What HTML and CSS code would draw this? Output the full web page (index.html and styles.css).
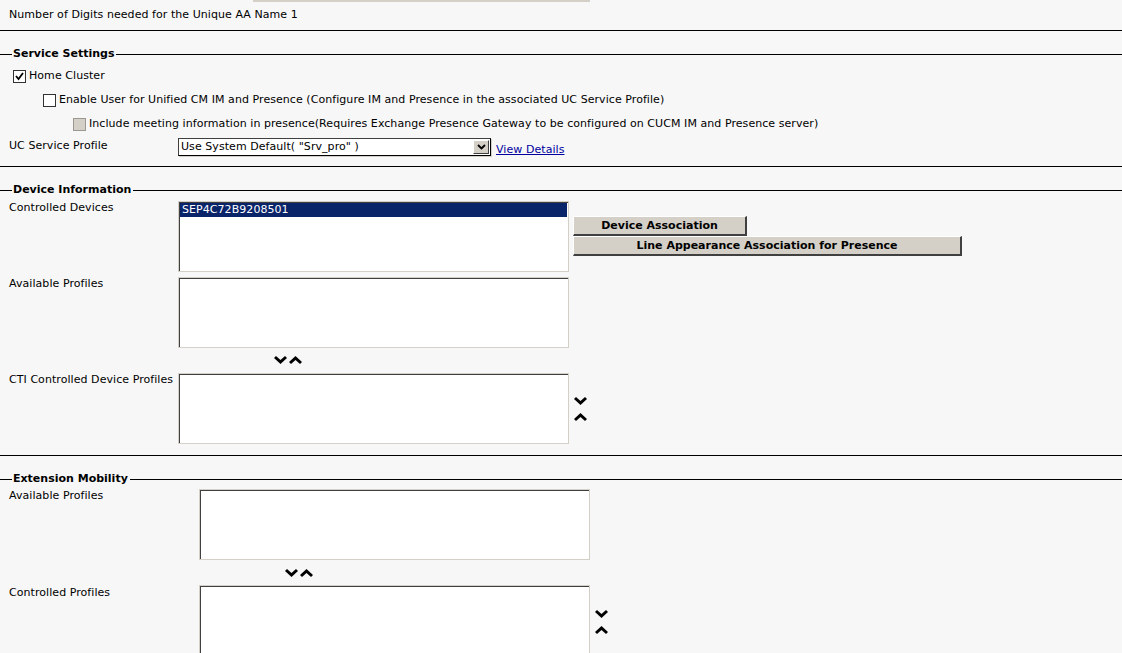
FILE: index.html
```html
<!DOCTYPE html>
<html>
<head>
<meta charset="utf-8">
<link rel="stylesheet" href="styles.css">
</head>
<body>
<div class="page">
  <div class="top-input"></div>
  <div class="row digits">Number of Digits needed for the Unique AA Name 1</div>
  <div class="rule rule-1"></div>

  <div class="legend legend-service"><span>Service Settings</span></div>
  <div class="chk-row chk-home"><span class="chk checked"><svg width="11" height="11" viewBox="0 0 11 11"><path d="M2 5 L4.5 8 L9 2" fill="none" stroke="#000" stroke-width="1.8"/></svg></span><span>Home Cluster</span></div>
  <div class="chk-row chk-enable"><span class="chk"></span><span>Enable User for Unified CM IM and Presence (Configure IM and Presence in the associated UC Service Profile)</span></div>
  <div class="chk-row chk-include"><span class="chk disabled"></span><span>Include meeting information in presence(Requires Exchange Presence Gateway to be configured on CUCM IM and Presence server)</span></div>
  <div class="uc-row">
    <div class="label uc-label">UC Service Profile</div>
    <div class="select"><span class="select-text">Use System Default( "Srv_pro" )</span><span class="select-btn"><svg width="11" height="8" viewBox="0 0 11 8"><path d="M2 2 L5.5 5.5 L9 2" fill="none" stroke="#000" stroke-width="1.8"/></svg></span></div>
    <a class="link" href="#">View Details</a>
  </div>
  <div class="rule rule-2"></div>

  <div class="legend legend-device"><span>Device Information</span></div>
  <div class="field-row row-controlled">
    <div class="label lab-a">Controlled Devices</div>
    <div class="listbox"><div class="opt selected">SEP4C72B9208501</div></div>
    <div class="buttons">
      <button class="btn btn-dev">Device Association</button>
      <button class="btn btn-line">Line Appearance Association for Presence</button>
    </div>
  </div>
  <div class="field-row row-avail">
    <div class="label lab-a">Available Profiles</div>
    <div class="listbox"></div>
  </div>
  <div class="arrows-h arrows-1">
    <svg width="28" height="8" viewBox="0 0 28 8"><polygon points="0,2 2,0 6.5,4 11,0 13,2 6.5,8" fill="#000"/><polygon points="15,6 17,8 21.5,4 26,8 28,6 21.5,0" fill="#000"/></svg>
  </div>
  <div class="field-row row-cti">
    <div class="label lab-a">CTI Controlled Device Profiles</div>
    <div class="listbox"></div>
    <div class="arrows-v">
      <svg width="13" height="24" viewBox="0 0 13 24"><polygon points="0,2 2,0 6.5,4 11,0 13,2 6.5,8" fill="#000"/><polygon points="0,22 2,24 6.5,20 11,24 13,22 6.5,16" fill="#000"/></svg>
    </div>
  </div>
  <div class="rule rule-3"></div>

  <div class="legend legend-ext"><span>Extension Mobility</span></div>
  <div class="field-row row-ext-avail">
    <div class="label lab-b">Available Profiles</div>
    <div class="listbox"></div>
  </div>
  <div class="arrows-h arrows-2">
    <svg width="28" height="8" viewBox="0 0 28 8"><polygon points="0,2 2,0 6.5,4 11,0 13,2 6.5,8" fill="#000"/><polygon points="15,6 17,8 21.5,4 26,8 28,6 21.5,0" fill="#000"/></svg>
  </div>
  <div class="field-row row-ext-ctrl">
    <div class="label lab-b">Controlled Profiles</div>
    <div class="listbox"></div>
    <div class="arrows-v">
      <svg width="13" height="24" viewBox="0 0 13 24"><polygon points="0,2 2,0 6.5,4 11,0 13,2 6.5,8" fill="#000"/><polygon points="0,22 2,24 6.5,20 11,24 13,22 6.5,16" fill="#000"/></svg>
    </div>
  </div>
</div>
</body>
</html>
```

FILE: styles.css
```css
html, body {
  margin: 0;
  padding: 0;
  background: #f7f7f7;
  height: 100%;
  overflow: hidden;
}
.page {
  font-family: "DejaVu Sans", Verdana, sans-serif;
  font-size: 11px;
  color: #000;
  line-height: 14px;
  letter-spacing: 0.06px;
}
.top-input {
  margin-left: 253px;
  width: 337px;
  height: 2px;
  background: #d4d0c8;
}
.row {
  padding-left: 9px;
}
.digits {
  margin-top: 6px;
}
.rule {
  height: 1px;
  background: #000;
}
.rule-1 { margin-top: 8px; }
.rule-2 { margin-top: 9px; }
.rule-3 { margin-top: 11px; }

.legend {
  display: flex;
  align-items: center;
  font-weight: bold;
  letter-spacing: 0;
  height: 14px;
}
.legend::before {
  content: "";
  width: 12px;
  height: 1px;
  background: #000;
  margin-right: 1px;
}
.legend::after {
  content: "";
  flex: 1;
  height: 1px;
  background: #000;
  margin-left: 2px;
}
.legend-service { margin-top: 16px; }
.legend-device { margin-top: 16px; }
.legend-ext { margin-top: 16px; }

.chk-row {
  display: flex;
  align-items: center;
  gap: 3px;
  height: 14px;
}
.chk {
  width: 11px;
  height: 11px;
  border: 1px solid #333;
  background: #fff;
  display: flex;
  align-items: center;
  justify-content: center;
}
.chk svg { display: block; }
.chk.disabled {
  background: #d4d0c8;
  border-color: #9a9890;
}
.chk-home { margin-top: 8px; padding-left: 13px; }
.chk-enable { margin-top: 10px; padding-left: 43px; }
.chk-include { margin-top: 10px; padding-left: 73px; }

.uc-row {
  display: flex;
  align-items: flex-start;
  margin-top: 8px;
  padding-left: 9px;
}
.uc-label {
  width: 169px;
}
.select {
  width: 311px;
  height: 16px;
  border: 1px solid #000;
  border-top-color: #404040;
  border-left-color: #404040;
  box-shadow: 1px 1px 0 #d4d0c8;
  background: #fff;
  display: flex;
  margin-top: -1px;
}
.select-text {
  flex: 1;
  padding-left: 2px;
  line-height: 16px;
}
.select-btn {
  width: 16px;
  height: 14px;
  margin: 1px;
  background: #d4d0c8;
  border-top: 1px solid #fff;
  border-left: 1px solid #fff;
  border-right: 1px solid #404040;
  border-bottom: 1px solid #404040;
  box-sizing: border-box;
  display: flex;
  align-items: center;
  justify-content: center;
}
.link {
  color: #0000a0;
  text-decoration: underline;
  margin-left: 5px;
  margin-top: 4px;
}

.field-row {
  display: flex;
  align-items: flex-start;
  padding-left: 9px;
}
.label { flex: none; }
.lab-a { width: 169px; }
.lab-b { width: 190px; }
.listbox {
  width: 388px;
  height: 68px;
  background: #fff;
  border: 1px solid #d4d0c8;
  box-shadow: inset 1px 1px 0 #404040;
  padding: 1px 0 0 1px;
}
.row-controlled { margin-top: 4px; }
.row-avail { margin-top: 5px; }
.row-cti { margin-top: 9px; }
.row-ext-avail { margin-top: 3px; }
.row-ext-ctrl { margin-top: 8px; }
.row-ext-ctrl .label { padding-top: 1px; }

.opt {
  height: 14px;
  line-height: 14px;
  padding-left: 2px;
  margin-right: 1px;
}
.opt.selected {
  background: #0a246a;
  color: #fff;
}
.buttons {
  display: flex;
  flex-direction: column;
  align-items: flex-start;
  margin-left: 4px;
  margin-top: 15px;
}
.btn {
  font-family: "DejaVu Sans", Verdana, sans-serif;
  font-size: 11px;
  font-weight: bold;
  background: #d4d0c8;
  border: none;
  border-top: 1px solid #fff;
  border-left: 1px solid #fff;
  border-right: 2px solid #404040;
  border-bottom: 2px solid #404040;
  height: 20px;
  padding: 0;
  margin: 0;
  color: #000;
}
.btn-dev { width: 174px; }
.btn-line { width: 389px; }

.arrows-h svg, .arrows-v svg { display: block; }
.arrows-1 { padding-left: 274px; margin-top: 8px; }
.arrows-2 { padding-left: 285px; margin-top: 9px; }
.arrows-v { margin-left: 5px; margin-top: 24px; }
.row-ext-ctrl .arrows-v { margin-top: 25px; }
```
